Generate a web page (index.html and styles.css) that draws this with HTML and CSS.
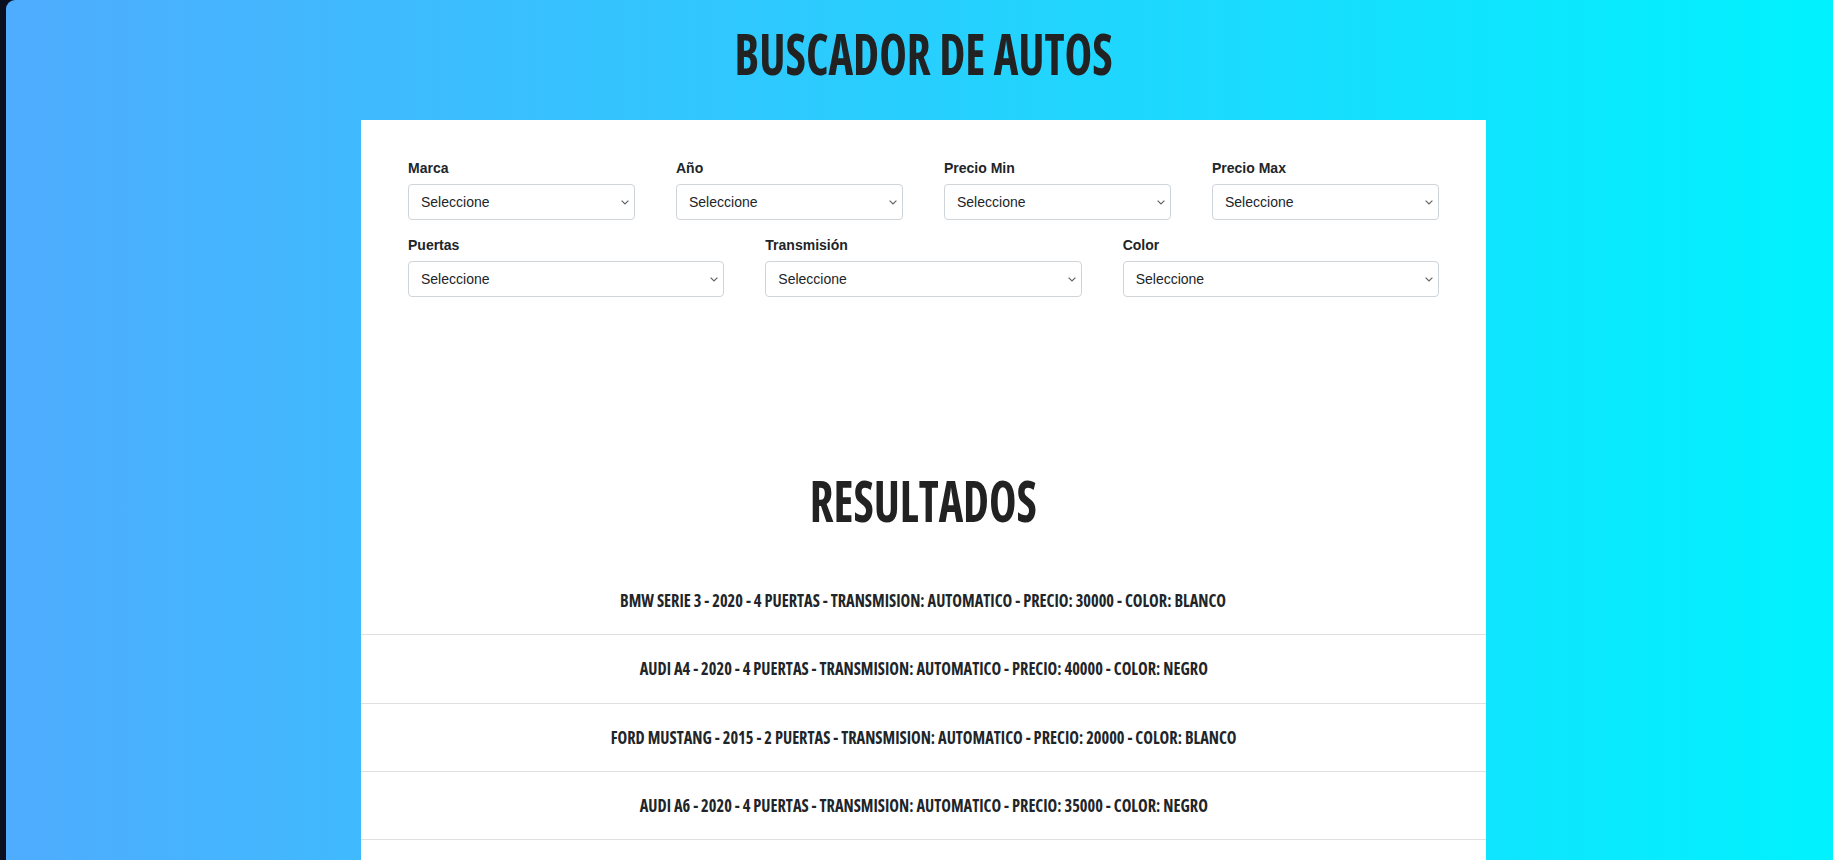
FILE: index.html
```html
<!DOCTYPE html>
<html lang="es">
<head>
<meta charset="utf-8">
<title>Buscador de Autos</title>
<link rel="stylesheet" href="styles.css">
</head>
<body>
<div class="window">
  <h1 class="page-title"><span class="squeeze">Buscador de Autos</span></h1>

  <main class="card">
    <form class="filters">
      <div class="filter-row four">
        <div class="field">
          <label for="marca">Marca</label>
          <select id="marca"><option>Seleccione</option></select>
        </div>
        <div class="field">
          <label for="year">Año</label>
          <select id="year"><option>Seleccione</option></select>
        </div>
        <div class="field">
          <label for="minimo">Precio Min</label>
          <select id="minimo"><option>Seleccione</option></select>
        </div>
        <div class="field">
          <label for="maximo">Precio Max</label>
          <select id="maximo"><option>Seleccione</option></select>
        </div>
      </div>
      <div class="filter-row three">
        <div class="field">
          <label for="puertas">Puertas</label>
          <select id="puertas"><option>Seleccione</option></select>
        </div>
        <div class="field">
          <label for="transmision">Transmisión</label>
          <select id="transmision"><option>Seleccione</option></select>
        </div>
        <div class="field">
          <label for="color">Color</label>
          <select id="color"><option>Seleccione</option></select>
        </div>
      </div>
    </form>

    <h2 class="section-title"><span class="squeeze">Resultados</span></h2>

    <ul class="results">
      <li class="result"><span class="result-text">BMW Serie 3 - 2020 - 4 Puertas - Transmision: automatico - Precio: 30000 - Color: Blanco</span></li>
      <li class="result"><span class="result-text">Audi A4 - 2020 - 4 Puertas - Transmision: automatico - Precio: 40000 - Color: Negro</span></li>
      <li class="result"><span class="result-text">Ford Mustang - 2015 - 2 Puertas - Transmision: automatico - Precio: 20000 - Color: Blanco</span></li>
      <li class="result"><span class="result-text">Audi A6 - 2020 - 4 Puertas - Transmision: automatico - Precio: 35000 - Color: Negro</span></li>
    </ul>
  </main>
</div>
</body>
</html>
```
FILE: styles.css
```css
html {
  background: #0b1020;
}

body {
  margin: 0;
  font-family: "Liberation Sans", Arial, sans-serif;
  color: #212529;
}

/* gradient app surface, framed by the dark window edge on the left */
.window {
  margin-left: 6px;
  min-height: 860px;
  padding: 19px 0 0 8px;
  box-sizing: border-box;
  background: linear-gradient(to right, #4facfe 0%, #00f2fe 100%);
  border-top-left-radius: 9px;
}

.page-title,
.section-title {
  margin: 0;
  text-align: center;
  font-family: "Open Sans", sans-serif;
  font-stretch: 75%;
  font-weight: 700;
  font-size: 57px;
  line-height: 68px;
  text-transform: uppercase;
  color: #222222;
}

.page-title {
  margin-bottom: 33px;
}

.squeeze {
  display: inline-block;
  transform: scaleX(0.815);
}

.page-title .squeeze {
  transform: scaleX(0.82);
}

.card {
  display: block;
  width: 1125px;
  margin: 0 auto;
  background: #ffffff;
  padding: 38px 0 40px;
}

.filters {
  display: flex;
  flex-direction: column;
  gap: 15px;
  padding: 0 47px;
}

.filter-row {
  display: grid;
  column-gap: 41px;
}

.filter-row.four {
  grid-template-columns: repeat(4, 1fr);
}

.filter-row.three {
  grid-template-columns: repeat(3, 1fr);
}

.field {
  display: flex;
  flex-direction: column;
}

.field label {
  font-size: 14px;
  font-weight: 700;
  line-height: 21px;
  margin-bottom: 5px;
  color: #212529;
}

.field select {
  -webkit-appearance: none;
  appearance: none;
  height: 36px;
  width: 100%;
  padding: 0 28px 0 12px;
  font-family: "Liberation Sans", Arial, sans-serif;
  font-size: 14px;
  color: #212529;
  background-color: #ffffff;
  background-image: url("data:image/svg+xml,%3Csvg xmlns='http://www.w3.org/2000/svg' viewBox='0 0 8 5'%3E%3Cpath d='M0.6 0.6 L4 4 L7.4 0.6' fill='none' stroke='%23666' stroke-width='1.2'/%3E%3C/svg%3E");
  background-repeat: no-repeat;
  background-position: right 5px center;
  background-size: 8px 5px;
  border: 1px solid #cfd4d9;
  border-radius: 4px;
}

.section-title {
  margin-top: 169px;
  margin-bottom: 33px;
}

.results {
  list-style: none;
  margin: 0;
  padding: 0;
}

.result {
  padding: 24px 0;
  border-bottom: 1px solid #e0e0e0;
  text-align: center;
  font-family: "Open Sans", sans-serif;
  font-stretch: 75%;
  font-weight: 700;
  font-size: 17.5px;
  line-height: 19.33px;
  text-transform: uppercase;
  color: #212529;
  white-space: nowrap;
}

.result-text {
  display: inline-block;
  transform: scaleX(0.935);
}
```
